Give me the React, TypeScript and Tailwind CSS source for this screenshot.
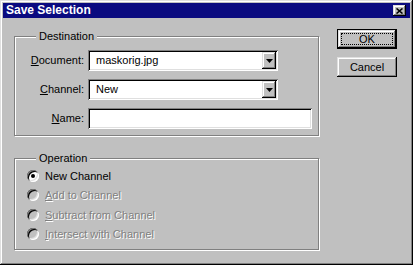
import type { ReactNode } from "react";

const raised =
  "shadow-[inset_-1px_-1px_0_#000,inset_1px_1px_0_#dfdfdf,inset_-2px_-2px_0_#808080,inset_2px_2px_0_#fff]";
const sunken =
  "shadow-[inset_1px_1px_0_#808080,inset_-1px_-1px_0_#fff,inset_2px_2px_0_#000,inset_-2px_-2px_0_#dfdfdf]";

function GroupBox({ title, className, children }: { title: string; className: string; children: ReactNode }) {
  return (
    <div className={`relative border border-[#808080] shadow-[inset_1px_1px_0_#fff,1px_1px_0_#fff] ${className}`}>
      <span className="absolute -top-[8px] left-[21px] px-[3px] bg-[#c0c0c0] leading-[14px]">{title}</span>
      {children}
    </div>
  );
}

function Combo({ value }: { value: string }) {
  return (
    <div className={`flex items-center justify-between w-[190px] h-[21px] bg-white p-[2px] ${sunken}`}>
      <span className="pl-[6px] text-black">{value}</span>
      <div className={`flex items-center justify-center w-[14px] h-[17px] bg-[#c0c0c0] ${raised}`}>
        <svg width="7" height="4" viewBox="0 0 7 4">
          <path d="M0 0h7L3.5 4z" fill="#000" />
        </svg>
      </div>
    </div>
  );
}

function Field({ label, u, children }: { label: string; u: string; children: ReactNode }) {
  return (
    <div className="flex items-center h-[21px]">
      <span className="w-[69px] text-right">
        <span className="underline">{u}</span>
        {label}
      </span>
      <div className="ml-[4px]">{children}</div>
    </div>
  );
}

function Radio({ u, label, checked, disabled }: { u?: string; label: string; checked?: boolean; disabled?: boolean }) {
  return (
    <div className="flex items-center h-[19.5px]">
      <div
        className={`flex items-center justify-center w-[12px] h-[12px] rounded-full ${disabled ? "bg-[#c0c0c0]" : "bg-white"} ${sunken}`}
      >
        {checked && <div className="w-[4px] h-[4px] rounded-full bg-black" />}
      </div>
      <span
        className={`ml-[6px] ${disabled ? "text-[#808080] [text-shadow:1px_1px_0_#fff]" : "text-black"}`}
      >
        {u && <span className="underline">{u}</span>}
        {label}
      </span>
    </div>
  );
}

export default function App() {
  return (
    <div
      className={`w-[413px] h-[265px] bg-[#c0c0c0] p-[3px] text-[11px] text-black font-['Liberation_Sans',Arial,sans-serif] ${raised}`}
    >
      {/* Title bar */}
      <div className="flex items-center justify-between h-[15px] bg-[#0a0a80] pl-[3px] pr-[4px]">
        <span className="text-white font-bold text-[12px] leading-[15px]">Save Selection</span>
        <div className={`flex items-center justify-center w-[13px] h-[11px] bg-[#c0c0c0] ${raised}`}>
          <svg width="7" height="6" viewBox="0 0 7 6">
            <path d="M0.5 0.5l6 5M6.5 0.5l-6 5" stroke="#000" strokeWidth="1.6" />
          </svg>
        </div>
      </div>

      <div className="flex pl-[11px]">
        {/* Left column */}
        <div className="flex flex-col w-[305px]">
          <GroupBox title="Destination" className="mt-[18px] h-[100px]">
            <div className="flex flex-col gap-[8px] pt-[13px]">
              <Field u="D" label="ocument:">
                <Combo value="maskorig.jpg" />
              </Field>
              <Field u="C" label="hannel:">
                <Combo value="New" />
              </Field>
              <Field u="N" label="ame:">
                <div className={`w-[224px] h-[21px] bg-white ${sunken}`} />
              </Field>
            </div>
          </GroupBox>

          <GroupBox title="Operation" className="mt-[22px] h-[92px]">
            <div className="flex flex-col pt-[7px] pl-[12px]">
              <Radio label="New Channel" checked />
              <Radio u="A" label="dd to Channel" disabled />
              <Radio u="S" label="ubtract from Channel" disabled />
              <Radio u="I" label="ntersect with Channel" disabled />
            </div>
          </GroupBox>
        </div>

        {/* Buttons */}
        <div className="flex flex-col gap-[8px] ml-[18px] mt-[11px]">
          <div className="w-[60px] h-[20px] border border-black bg-[#c0c0c0]">
            <div className={`w-full h-full p-[3px] ${raised}`}>
              <div className="flex items-center justify-center w-full h-full outline outline-1 outline-dotted outline-black -outline-offset-1">
                OK
              </div>
            </div>
          </div>
          <div className={`flex items-center justify-center w-[60px] h-[20px] bg-[#c0c0c0] ${raised}`}>
            Cancel
          </div>
        </div>
      </div>
    </div>
  );
}
